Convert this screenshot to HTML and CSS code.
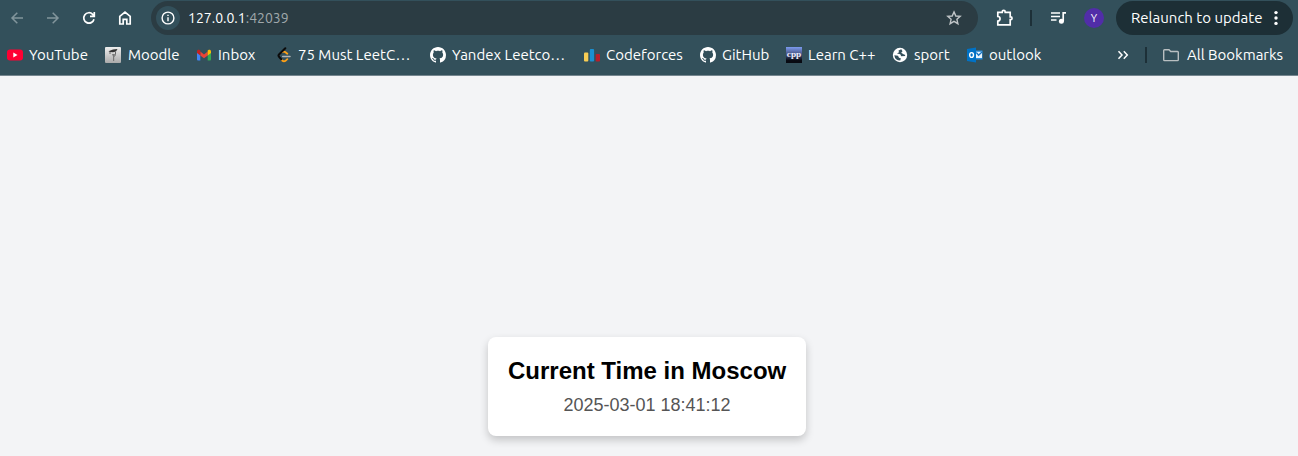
FILE: index.html
```html
<!DOCTYPE html>
<html lang="en">
<head>
<meta charset="utf-8">
<title>Current Time in Moscow</title>
<link rel="stylesheet" href="styles.css">
</head>
<body>
<header class="browser">
  <div class="toolbar">
    <nav class="nav">
      <svg class="dim" width="16" height="16" viewBox="0 0 16 16"><path d="M14 8H3M8.300 2.700 3 8 8.300 13.300"/></svg>
      <svg class="dim" width="16" height="16" viewBox="0 0 16 16"><path d="M2 8H13M7.700 2.700 13 8 7.700 13.300"/></svg>
      <svg width="16" height="16" viewBox="0 0 16 16"><path d="M13 9.200A5.200 5.200 0 1 1 11.700 4.300L13 5.700M13.300 2V6.300H9"/></svg>
      <svg width="16" height="16" viewBox="0 0 16 16"><path d="M2.800 14V6.300L8 2.200 13.200 6.300V14H9.800V9.300H6.200V14Z"/></svg>
    </nav>
    <div class="omnibox">
      <span class="site-info"><svg width="14" height="14" viewBox="0 0 14 14"><circle cx="7" cy="7" r="5.900"/><path d="M7 6.300V10.200M7 3.700V5.100"/></svg></span>
      <span class="url">127.0.0.1<span class="port">:42039</span></span>
      <svg class="star" width="16" height="16" viewBox="0 0 16 16"><path d="M8 1.900 9.800 6 14.200 6.400 10.900 9.300 11.900 13.700 8 11.400 4.100 13.700 5.100 9.300 1.800 6.400 6.200 6Z"/></svg>
    </div>
    <svg class="puzzle" width="18" height="18" viewBox="0 0 18 18"><path d="M1.800 3.400H6.200V2.900A1.500 1.500 0 0 1 9.200 2.900V3.400H14.200V7.900H14.700A1.300 1.300 0 0 1 14.700 10.600H14.200V15.800H1.800V12A2.200 2.200 0 0 0 1.800 7.500Z"/></svg>
    <span class="divider"></span>
    <svg class="media" width="17" height="16" viewBox="0 0 17 16"><path d="M1 3H10M1 6.500H10M1 10H6.500M13.200 11V2.800H16"/><circle class="solid" cx="11.400" cy="11.200" r="2.500"/></svg>
    <span class="avatar">Y</span>
    <button class="relaunch"><span>Relaunch to update</span><svg width="4" height="16" viewBox="0 0 4 16"><circle class="solid" cx="2" cy="2.600" r="1.700"/><circle class="solid" cx="2" cy="8" r="1.700"/><circle class="solid" cx="2" cy="13.400" r="1.700"/></svg></button>
  </div>
  <div class="bookmarks">
    <a class="bm youtube"><svg class="icon" viewBox="0 0 16 16"><rect x="0" y="2.500" width="16" height="11" rx="3" fill="#ff0033"/><path d="M6.300 5.600V10.400L10.500 8Z" fill="#fff"/></svg><span>YouTube</span></a>
    <a class="bm moodle"><svg class="icon" viewBox="0 0 16 16"><defs><linearGradient id="silver" x2="0" y2="1"><stop stop-color="#eee"/><stop offset="1" stop-color="#aaa"/></linearGradient></defs><rect width="16" height="16" rx="1" fill="url(#silver)"/><path d="M3.500 4.300 8 2.500 12.500 2 11 4.500 8 5.300 5 5Z" fill="#333"/><path d="M5 5V7M10.500 5V7.500L9.500 9.500" fill="none" stroke="#666" stroke-width="1"/><path d="M7 7H10L9.200 9.500V14H8V9.500Z" fill="#777"/></svg><span>Moodle</span></a>
    <a class="bm inbox"><svg class="icon" viewBox="0 0 16 16"><path d="M1 5 4.300 7.500V13.500H2Q1 13.500 1 12.500Z" fill="#4285f4"/><path d="M15 5 11.700 7.500V13.500H14Q15 13.500 15 12.500Z" fill="#34a853"/><path d="M4.300 4.600 8 7.400 11.700 4.600V8.500L8 11.200 4.300 8.500Z" fill="#ea4335"/><path d="M1 6V4.300C1 2.700 2.600 2.300 3.600 3L4.300 3.600V8.500Z" fill="#c5221f"/><path d="M15 6V4.300C15 2.700 13.400 2.300 12.400 3L11.700 3.600V8.500Z" fill="#fbbc04"/></svg><span>Inbox</span></a>
    <a class="bm leetcode"><svg class="icon" viewBox="0 0 16 16" fill="none" stroke-width="1.800" stroke-linecap="round"><path d="M6.500 5Q8.200 4.100 9.500 5.200L11.300 6.700M5.500 12.500 6.500 13.800Q8 15 9.500 13.800L11.300 12.200" stroke="#ffa116"/><path d="M5.300 12.200 3.200 10Q1.800 8.600 3.200 7.200L9.300 1.200" stroke="#0b0b0b" stroke-width="2"/><path d="M6.700 9.500H14" stroke="#b3b3b3" stroke-width="1.500"/></svg><span>75 Must LeetC…</span></a>
    <a class="bm yandex"><svg class="icon" viewBox="0 0 16 16"><path id="octocat" fill="#fff" d="M8 0C3.580 0 0 3.580 0 8c0 3.540 2.290 6.530 5.470 7.590.4.070.55-.17.55-.38 0-.19-.01-.82-.01-1.490-2.010.37-2.530-.49-2.690-.94-.09-.23-.48-.94-.82-1.130-.28-.15-.68-.52-.01-.53.63-.01 1.080.58 1.230.82.72 1.210 1.870.87 2.330.66.07-.52.28-.87.51-1.070-1.780-.2-3.640-.89-3.640-3.950 0-.87.31-1.590.82-2.150-.08-.2-.36-1.020.08-2.120 0 0 .67-.21 2.200.82.64-.18 1.320-.27 2-.27s1.360.09 2 .27c1.530-1.040 2.200-.82 2.200-.82.44 1.100.16 1.920.08 2.120.51.56.82 1.270.82 2.150 0 3.070-1.870 3.750-3.650 3.950.29.25.54.73.54 1.480 0 1.070-.01 1.930-.01 2.200 0 .21.15.46.55.38A8.010 8.010 0 0 0 16 8c0-4.420-3.580-8-8-8Z"/></svg><span>Yandex Leetco…</span></a>
    <a class="bm codeforces"><svg class="icon" viewBox="0 0 16 16"><rect y="5.500" width="4.300" height="9" rx="1" fill="#f9cd54"/><rect x="5.800" y="2" width="4.300" height="12.500" rx="1" fill="#1a8fd0"/><rect x="11.700" y="7" width="4.300" height="7.500" rx="1" fill="#b71f2b"/></svg><span>Codeforces</span></a>
    <a class="bm github"><svg class="icon" viewBox="0 0 16 16"><use href="#octocat"/></svg><span>GitHub</span></a>
    <a class="bm cpp"><svg class="icon" viewBox="0 0 16 16"><defs><linearGradient id="night" x2="0" y2="1"><stop stop-color="#7d9bf0"/><stop offset=".45" stop-color="#475482"/><stop offset=".85" stop-color="#080a12"/></linearGradient></defs><rect width="16" height="16" fill="url(#night)"/><text class="cpp-text" x="8" y="9.500" text-anchor="middle" textLength="14.500" lengthAdjust="spacingAndGlyphs">cpp</text></svg><span>Learn C++</span></a>
    <a class="bm sport"><svg class="icon" viewBox="0 0 16 16"><circle cx="8" cy="8" r="7.200" fill="#fff"/><path d="M9.300 2.300 6.500 3.500 7 5.300 5 6.500 8.300 7.200 9.200 9.300 13.300 8.900Q13.300 7.200 11.500 7.200L9.200 5.800 10.500 4.300ZM2.300 8.300 6 8.700 7 10.700 8.800 11.300 8.300 13.500Q3 13.500 2.300 8.300Z" fill="#33505b"/></svg><span>sport</span></a>
    <a class="bm outlook"><svg class="icon" viewBox="0 0 16 16"><path d="M8 3.500H15.500V12.500H8Z" fill="#2a8dda"/><path d="M9 4.800H15V11H9Z" fill="#e9f4fc"/><path d="M9.300 5.500 11.600 8.200 15 5" fill="none" stroke="#1675c5" stroke-width="1.300"/><path d="M0 2 9 .5V15.500L0 14Z" fill="#0072c6"/><ellipse cx="4.600" cy="8" rx="1.900" ry="2.400" fill="none" stroke="#fff" stroke-width="1.400"/></svg><span>outlook</span></a>
    <svg class="more" width="12" height="12" viewBox="0 0 12 12"><path d="M1.500 2.300 5 6 1.500 9.700M6.800 2.300 10.300 6 6.800 9.700"/></svg>
    <span class="divider"></span>
    <a class="bm all"><svg class="icon folder" viewBox="0 0 16 16"><path d="M.7 3.500Q.7 2.700 1.500 2.700H6L7.700 4.500H14.500Q15.300 4.500 15.300 5.300V12.800Q15.300 13.600 14.500 13.600H1.500Q.7 13.600.7 12.800Z"/></svg><span>All Bookmarks</span></a>
  </div>
</header>
<main class="page">
  <section class="card">
    <h1>Current Time in Moscow</h1>
    <p>2025-03-01 18:41:12</p>
  </section>
</main>
</body>
</html>
```
FILE: styles.css
```css
* { box-sizing: border-box; }
body { margin: 0; height: 456px; overflow: hidden; background: #f3f4f6; font-family: "Liberation Sans", Arial, sans-serif; }
.browser { height: 76px; background: #33505b; border-bottom: 1px solid #75868f; color: #fff; font-family: Ubuntu, "Noto Sans", sans-serif; font-size: 15px; line-height: 20px; }
.toolbar { display: flex; align-items: center; height: 36px; }
.toolbar svg, .more { fill: none; stroke: #fff; stroke-width: 1.7; flex: none; }
.toolbar .solid { fill: #fff; stroke: none; }
.nav { display: flex; gap: 20px; width: 151px; padding-left: 9px; }
.toolbar .dim { stroke: #82959c; stroke-width: 1.5; }
.omnibox { display: flex; align-items: center; width: 827px; height: 34px; padding: 0 16px 0 5px; border-radius: 17px; background: #2b3c43; }
.site-info { display: grid; place-items: center; width: 24px; height: 24px; border-radius: 50%; background: #33505b; }
.site-info svg { stroke-width: 1.4; }
.url { margin-left: 8px; flex: 1; font-size: 14px; }
.port { color: #a0a8ab; }
.toolbar .star { stroke: #c0c5c7; stroke-width: 1.4; }
.puzzle { margin-left: 18px; }
.divider { width: 2px; height: 16px; background: #1d3038; flex: none; }
.toolbar .divider { margin-left: 16px; }
.media { margin-left: 18px; }
.avatar { display: grid; place-items: center; width: 20px; height: 20px; margin-left: 17px; border-radius: 50%; background: #512da8; font-size: 11px; }
.relaunch { display: flex; align-items: center; justify-content: space-between; width: 177px; height: 34px; margin-left: 12px; padding: 0 15px; border: 0; border-radius: 17px; background: #1d2f36; color: #fff; font: inherit; }
.relaunch span { white-space: nowrap; }
.bookmarks { display: flex; align-items: center; height: 38px; padding-left: 7px; }
.bm { display: flex; align-items: center; gap: 6px; flex: none; white-space: nowrap; }
.icon { width: 16px; height: 16px; flex: none; }
.youtube { width: 98px; }
.moodle { width: 91px; }
.moodle { gap: 7px; }
.all { gap: 8px; }
.inbox { width: 80px; }
.leetcode, .yandex { width: 154px; }
.codeforces { width: 116px; }
.github { width: 86px; }
.cpp { width: 106px; }
.sport { width: 75px; }
.outlook { width: 150px; }
.cpp-text { font: bold 8px "Liberation Serif", serif; fill: #eef; }
.more { stroke-width: 1.5; }
.bookmarks .divider { margin: 0 16px; }
.folder { fill: none; stroke: #b9bfc1; stroke-width: 1.4; }
.page { display: flex; justify-content: center; padding: 261px 4px 0 0; }
.card { width: 318px; height: 99px; padding: 20px; border-radius: 8px; background: #fff; box-shadow: 0 4px 8px rgba(0, 0, 0, .2); text-align: center; white-space: nowrap; }
h1 { margin: 0 0 10px; font-size: 24px; line-height: 28px; }
p { margin: 0; font-size: 18px; line-height: 20px; color: #555; }
```
